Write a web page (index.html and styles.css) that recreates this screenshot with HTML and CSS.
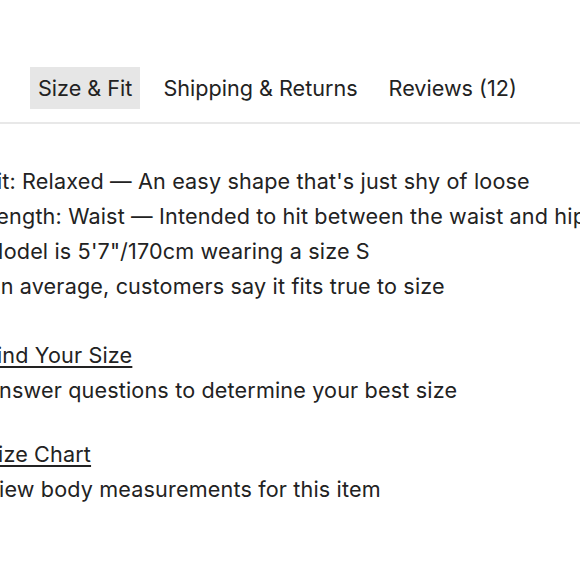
FILE: index.html
```html
<!DOCTYPE html>
<html lang="en">
<head>
<meta charset="utf-8">
<title>Size &amp; Fit</title>
<link rel="stylesheet" href="styles.css">
</head>
<body>
<div class="page">
  <nav class="tabs">
    <button class="tab active">Size &amp; Fit</button>
    <button class="tab">Shipping &amp; Returns</button>
    <button class="tab">Reviews (12)</button>
  </nav>
  <section class="panel">
    <ul class="facts">
      <li>Fit: Relaxed — An easy shape that's just shy of loose</li>
      <li>Length: Waist — Intended to hit between the waist and hips</li>
      <li>Model is 5'7"/170cm wearing a size S</li>
      <li>On average, customers say it fits true to size</li>
    </ul>
    <div class="tool first">
      <a class="tool-link" href="#">Find Your Size</a>
      <p class="tool-desc">Answer questions to determine your best size</p>
    </div>
    <div class="tool second">
      <a class="tool-link" href="#">Size Chart</a>
      <p class="tool-desc">View body measurements for this item</p>
    </div>
  </section>
</div>
</body>
</html>
```
FILE: styles.css
```css
html, body {
  margin: 0;
  padding: 0;
  background: #ffffff;
}
body {
  font-family: "Inter", "Noto Sans", sans-serif;
  color: #222222;
  overflow: hidden;
}
.page {
  margin-left: -16px;
  width: 720px;
}
.tabs {
  display: flex;
  gap: 15px;
  padding: 67px 0 13px 46px;
  border-bottom: 2px solid #e8e8e8;
}
.tab {
  font: inherit;
  font-size: 21.6px;
  line-height: 26px;
  color: #222222;
  background: transparent;
  border: 0;
  padding: 8px 8px;
  margin: 0;
  white-space: nowrap;
}
.tab.active {
  background: #e6e6e6;
}
.panel {
  padding-top: 40px;
  font-size: 21.6px;
  line-height: 35px;
  letter-spacing: 0.15px;
  white-space: nowrap;
}
.facts {
  list-style: none;
  margin: 0;
  padding: 0;
}
.tool {
  display: flex;
  flex-direction: column;
  align-items: flex-start;
}
.tool.first { margin-top: 34px; }
.tool.second { margin-top: 29px; }
.tool-link {
  color: #222222;
  text-decoration: underline;
  text-underline-offset: 3px;
}
.tool-desc {
  margin: 0;
}
```
